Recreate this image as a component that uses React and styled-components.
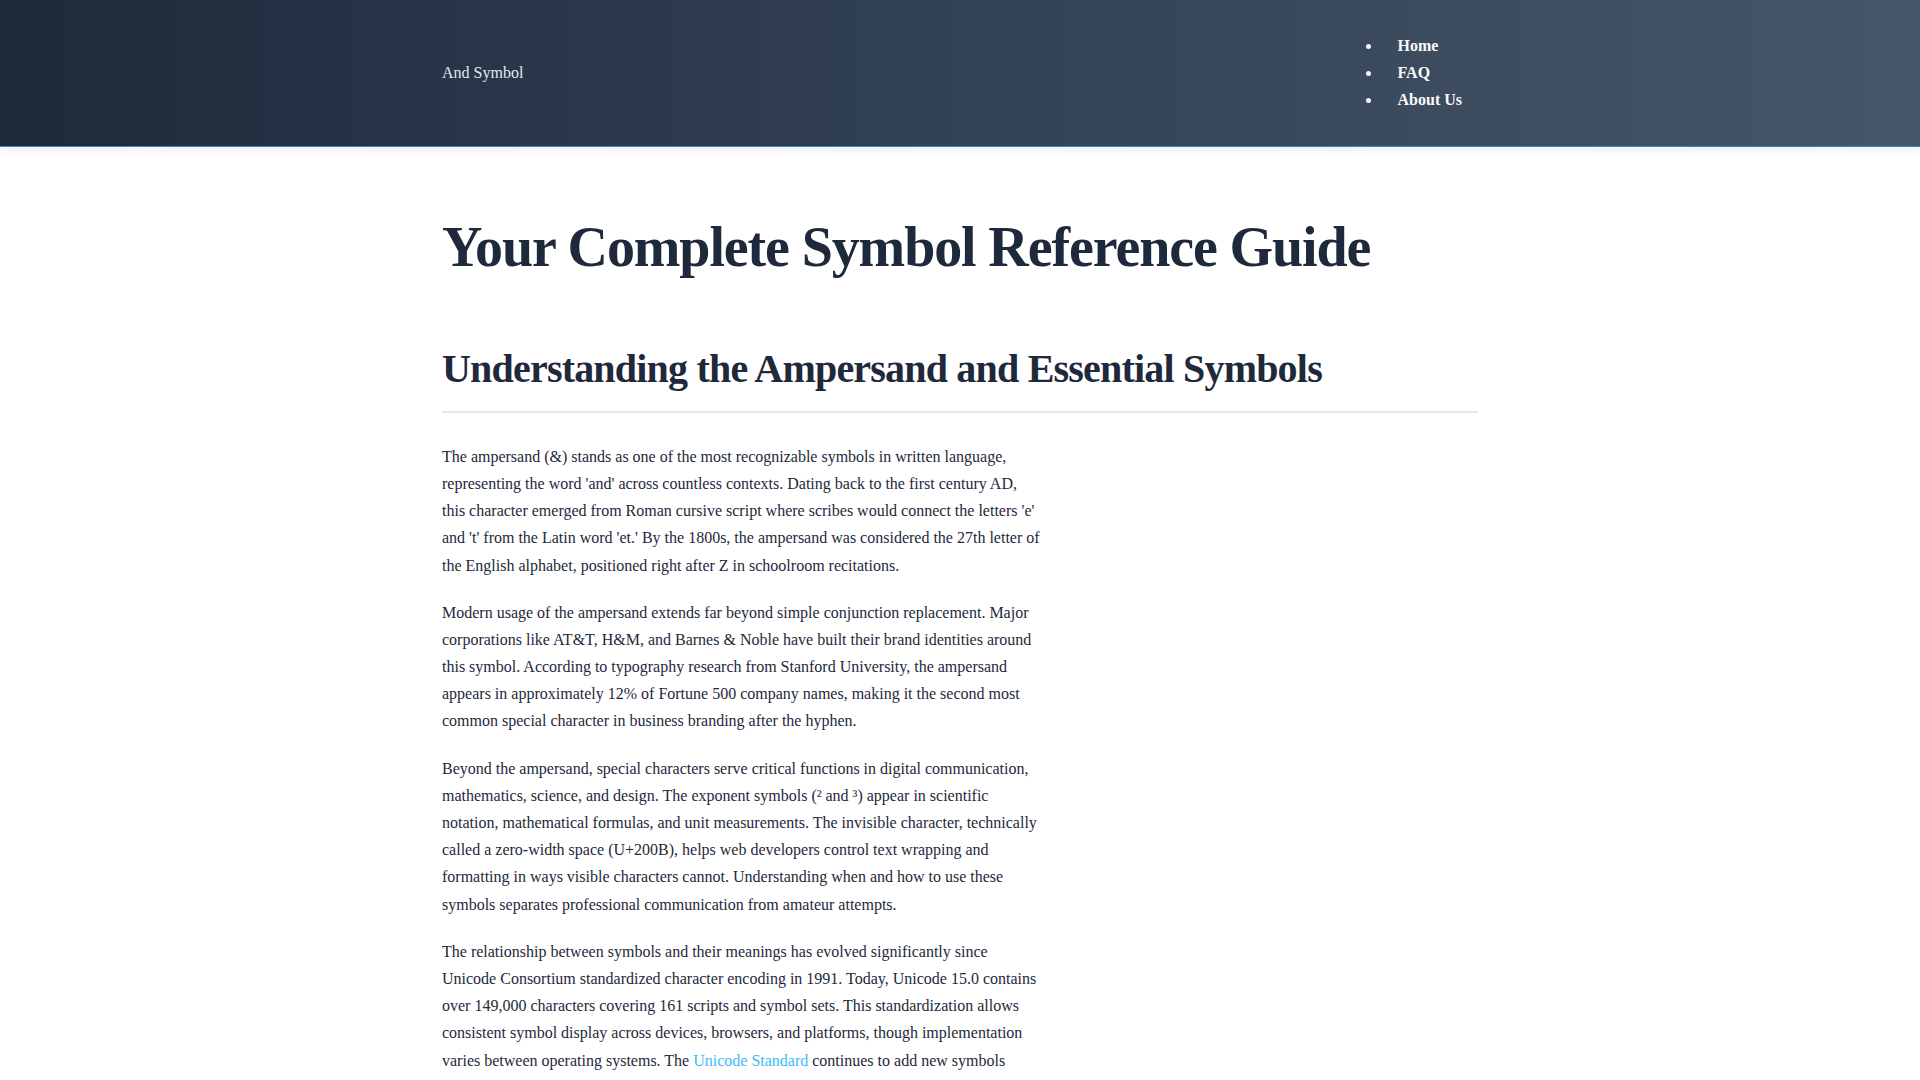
import React from "react";
import styled, { createGlobalStyle } from "styled-components";

const GlobalStyle = createGlobalStyle`
  html, body {
    margin: 0;
    padding: 0;
    background: #ffffff;
  }
  body {
    font-family: "Liberation Serif", "Times New Roman", serif;
    font-size: 16px;
    line-height: 1.7;
    color: #1e293b;
  }
  * { box-sizing: border-box; }
`;

const Header = styled.header`
  background: linear-gradient(90deg, #1e293b 0%, #334155 50%, #475569 100%);
  border-bottom: 1px solid #3f86bd;
  box-shadow: 0 3px 10px rgba(15, 23, 42, 0.08);
  padding: 2rem 0;
`;

const Container = styled.div`
  max-width: 1100px;
  margin: 0 auto;
  padding: 0 2rem;
`;

const HeaderInner = styled(Container)`
  display: flex;
  align-items: center;
  justify-content: space-between;
`;

const Logo = styled.a`
  color: #e2e8f0;
  text-decoration: none;
  font-size: 16px;
`;

const NavList = styled.ul`
  margin: 0;
  padding-left: 40px;
  color: #f1f5f9;
  list-style: disc;
`;

const NavItem = styled.li`
  line-height: 1.7;
`;

const NavLink = styled.a`
  color: #f8fafc;
  font-weight: 700;
  text-decoration: none;
  padding: 0 1rem;
`;

const Main = styled(Container)`
  padding-top: 67px;
  padding-bottom: 4rem;
`;

const Title = styled.h1`
  font-size: 56px;
  line-height: 1.2;
  font-weight: 700;
  letter-spacing: -0.02em;
  color: #1e293b;
  margin: 0 0 4rem;
`;

const SectionTitle = styled.h2`
  font-size: 40px;
  line-height: 1.2;
  font-weight: 700;
  letter-spacing: -0.02em;
  color: #1e293b;
  margin: 0 0 30px;
  padding-bottom: 18px;
  border-bottom: 2px solid #e2e8f0;
`;

const Article = styled.div`
  max-width: 600px;
`;

const Paragraph = styled.p`
  margin: 0 0 20px;
  color: #1e293b;
`;

const Link = styled.a`
  color: #38bdf8;
  text-decoration: none;
`;

export default function App() {
  return (
    <>
      <GlobalStyle />
      <Header>
        <HeaderInner>
          <Logo href="#">And Symbol</Logo>
          <nav>
            <NavList>
              <NavItem><NavLink href="#">Home</NavLink></NavItem>
              <NavItem><NavLink href="#">FAQ</NavLink></NavItem>
              <NavItem><NavLink href="#">About Us</NavLink></NavItem>
            </NavList>
          </nav>
        </HeaderInner>
      </Header>
      <Main as="main">
        <Title>Your Complete Symbol Reference Guide</Title>
        <SectionTitle>Understanding the Ampersand and Essential Symbols</SectionTitle>
        <Article>
          <Paragraph>
            The ampersand (&amp;) stands as one of the most recognizable symbols in written language,
            representing the word 'and' across countless contexts. Dating back to the first century AD,
            this character emerged from Roman cursive script where scribes would connect the letters 'e'
            and 't' from the Latin word 'et.' By the 1800s, the ampersand was considered the 27th letter of
            the English alphabet, positioned right after Z in schoolroom recitations.
          </Paragraph>
          <Paragraph>
            Modern usage of the ampersand extends far beyond simple conjunction replacement. Major
            corporations like AT&amp;T, H&amp;M, and Barnes &amp; Noble have built their brand identities around
            this symbol. According to typography research from Stanford University, the ampersand
            appears in approximately 12% of Fortune 500 company names, making it the second most
            common special character in business branding after the hyphen.
          </Paragraph>
          <Paragraph>
            Beyond the ampersand, special characters serve critical functions in digital communication,
            mathematics, science, and design. The exponent symbols (² and ³) appear in scientific
            notation, mathematical formulas, and unit measurements. The invisible character, technically
            called a zero-width space (U+200B), helps web developers control text wrapping and
            formatting in ways visible characters cannot. Understanding when and how to use these
            symbols separates professional communication from amateur attempts.
          </Paragraph>
          <Paragraph>
            The relationship between symbols and their meanings has evolved significantly since
            Unicode Consortium standardized character encoding in 1991. Today, Unicode 15.0 contains
            over 149,000 characters covering 161 scripts and symbol sets. This standardization allows
            consistent symbol display across devices, browsers, and platforms, though implementation
            varies between operating systems. The <Link href="#">Unicode Standard</Link> continues to add new symbols
            annually, reflecting changes in how people write, share, and communicate online.
          </Paragraph>
        </Article>
      </Main>
    </>
  );
}
